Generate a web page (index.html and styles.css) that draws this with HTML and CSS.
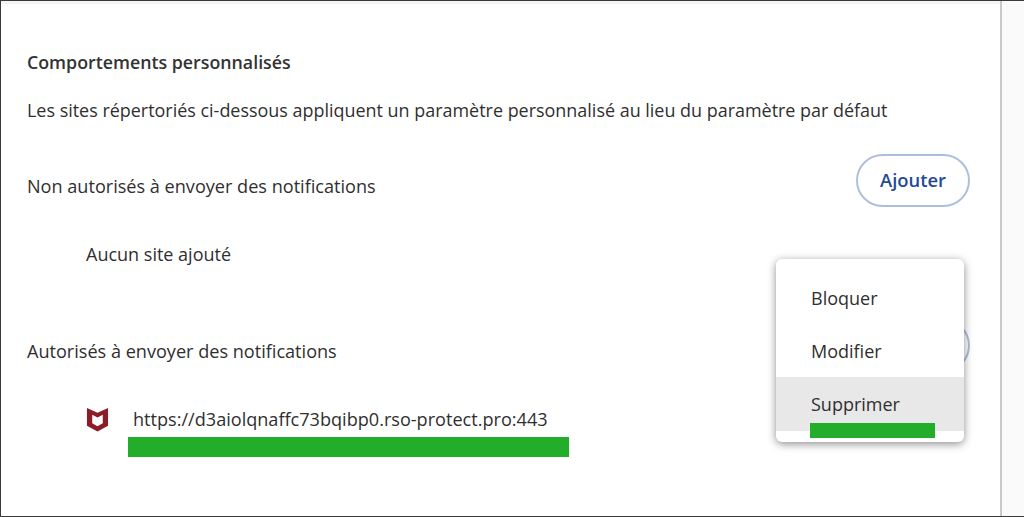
FILE: index.html
```html
<!DOCTYPE html>
<html lang="fr">
<head>
<meta charset="utf-8">
<title>Comportements personnalisés</title>
<link rel="stylesheet" href="styles.css">
</head>
<body>
<div class="window">
  <main class="content">
    <h2 class="title">Comportements personnalisés</h2>
    <p class="desc">Les sites répertoriés ci-dessous appliquent un paramètre personnalisé au lieu du paramètre par défaut</p>
    <div class="row row-first">
      <span class="label">Non autorisés à envoyer des notifications</span>
      <button class="btn">Ajouter</button>
    </div>
    <p class="empty">Aucun site ajouté</p>
    <div class="row row-second">
      <span class="label">Autorisés à envoyer des notifications</span>
      <button class="btn">Ajouter</button>
    </div>
    <div class="site">
      <svg class="logo" viewBox="0 0 24 26" width="23" height="25" aria-hidden="true">
        <path fill="#8c1c26" fill-rule="evenodd" d="M1 1 L12 6 L23 1 V19.5 L12 25.5 L1 19.5 Z M6.5 8 V17 L12 20 L17.5 17 V8 L12 10.8 Z"/>
      </svg>
      <div class="site-body">
        <span class="url">https://d3aiolqnaffc73bqibp0.rso-protect.pro:443</span>
        <div class="mark mark-url"></div>
      </div>
    </div>
    <div class="menu">
      <div class="item">Bloquer</div>
      <div class="item">Modifier</div>
      <div class="item item-hover">Supprimer</div>
      <div class="mark mark-menu"></div>
    </div>
  </main>
  <aside class="scrollbar"></aside>
</div>
</body>
</html>
```

FILE: styles.css
```css
* { box-sizing: border-box; }
html, body { margin: 0; height: 100%; background: #fff; }
body {
  font-family: "Open Sans", "Noto Sans", "Liberation Sans", sans-serif;
  color: #2f2f2f;
  font-size: 18px;
  overflow: hidden;
}
.window {
  display: flex;
  width: 1024px;
  height: 517px;
  border-top: 1px solid #3a3a3a;
  border-left: 1px solid #3a3a3a;
  border-bottom: 1px solid #3a3a3a;
}
.content {
  position: relative;
  flex: 1;
  padding: 46px 30px 0 26px;
  border-top: 3px solid #f4f4f4;
}
.scrollbar {
  width: 24px;
  background: #fafafa;
  border-left: 2px solid #c9c9cc;
}
.title {
  margin: 0;
  font-size: 17.8px;
  line-height: 24px;
  font-weight: 600;
  color: #333;
}
.desc {
  margin: 24px 0 0;
  font-size: 17.95px;
  line-height: 24px;
  white-space: nowrap;
}
.row {
  display: flex;
  align-items: flex-start;
  justify-content: space-between;
  height: 53px;
}
.label { margin-top: 20px; font-size: 18.1px; line-height: 24px; }
.row-first { margin-top: 32px; }
.row-second { margin-top: 53px; }
.btn {
  width: 114px;
  height: 53px;
  padding: 0 0 3px;
  border: 2px solid #aebfdd;
  border-radius: 27px;
  background: #fff;
  color: #234a94;
  font: 600 18.4px "Open Sans", "Noto Sans", sans-serif;
}
.empty {
  margin: 35px 0 0 59px;
  line-height: 24px;
}
.site {
  display: flex;
  align-items: flex-start;
  margin: 35px 0 0 59px;
  gap: 24px;
  height: 60px;
}
.logo { flex: none; }
.url { display: block; font-size: 18.1px; line-height: 24px; white-space: nowrap; }
.mark { background: #22ad2a; }
.mark-url {
  width: 441px;
  height: 20px;
  margin: 6px 0 0 -5px;
}
.menu {
  position: absolute;
  left: 775px;
  top: 255px;
  width: 188px;
  height: 183px;
  padding-top: 12px;
  background: #fff;
  border-radius: 6px;
  box-shadow: 0 2px 8px rgba(0,0,0,.45);
}
.item {
  height: 53px;
  padding-left: 35px;
  padding-top: 1px;
  line-height: 53px;
}
.item-hover {
  height: 54px;
  background: #e8e8e8;
}
.mark-menu {
  position: absolute;
  left: 34px;
  top: 164px;
  width: 125px;
  height: 15px;
}
```
